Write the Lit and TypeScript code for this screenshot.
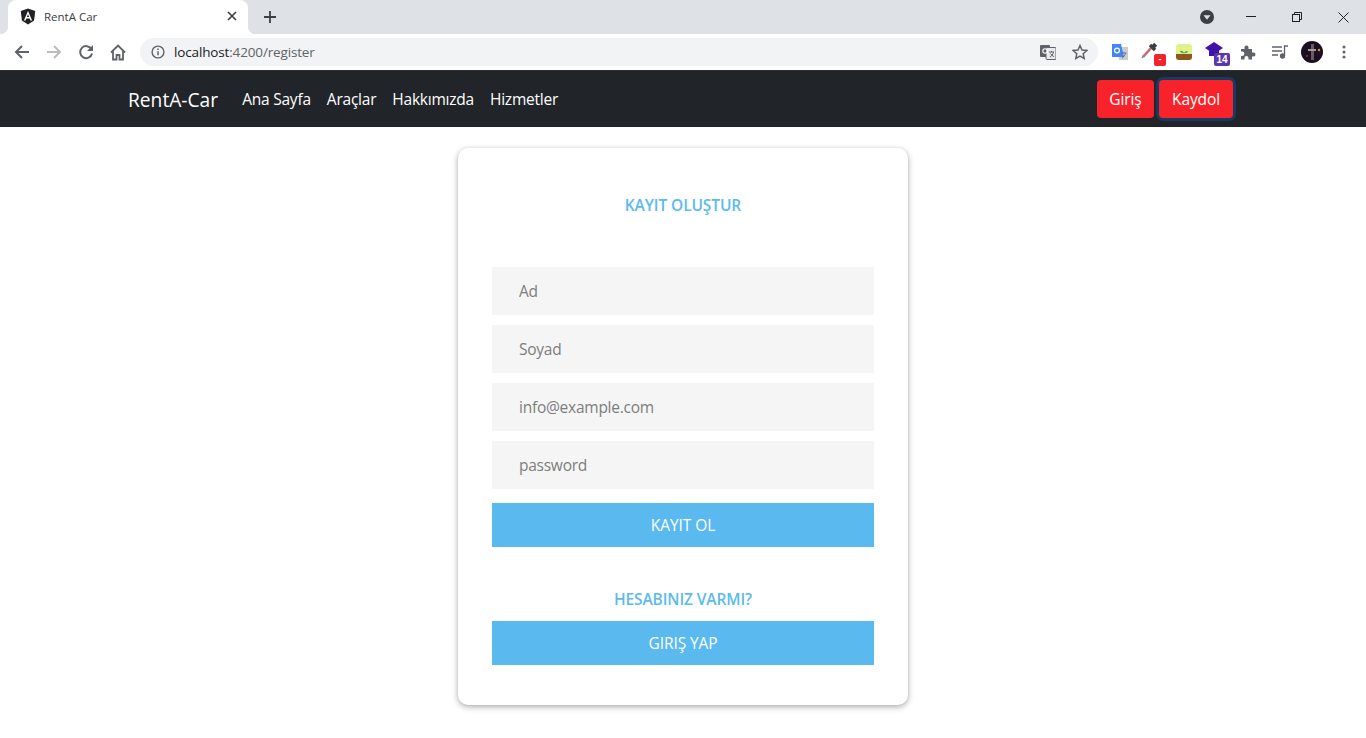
import { LitElement, html, css } from "lit";
import { customElement } from "lit/decorators.js";

@customElement("app-root")
export class AppRoot extends LitElement {
  static styles = css`
    :host { display: block; height: 738px; overflow: hidden; background: #fff; font-family: "Open Sans","Noto Sans",sans-serif; }
    svg { display: block; flex: none; }
    .tabstrip { height: 34px; background: #dee1e6; display: flex; align-items: flex-end; position: relative; }
    .tab { width: 240px; height: 34px; margin-left: 8px; background: #fff; border-radius: 8px 8px 0 0; display: flex; align-items: center; padding: 0 8px 2px 12px; box-sizing: border-box; position: relative; }
    .tab::before, .tab::after { content: ""; position: absolute; bottom: 0; width: 8px; height: 8px; background: radial-gradient(circle at 0 0, transparent 8px, #fff 8.5px); }
    .tab::before { left: -8px; }
    .tab::after { right: -8px; transform: scaleX(-1); }
    .tab-title { font-size: 11.5px; color: #3c4043; margin-left: 8px; flex: 1; }
    .tab-close { margin-right: 3px; }
    .newtab { margin-left: 16px; align-self: center; }
    .winctl { margin-left: auto; display: flex; align-items: center; height: 34px; }
    .profile-dot { margin-right: 14px; }
    .winbtn { width: 46px; display: flex; justify-content: center; }
    .toolbar { height: 36px; background: #fff; display: flex; align-items: center; box-sizing: border-box; padding-left: 6px; }
    .nav-ic { width: 32px; display: flex; justify-content: center; }
    .omni { width: 958px; height: 28px; margin-left: 6px; border-radius: 14px; background: #f1f3f4; display: flex; align-items: center; padding: 0 10px 0 11px; box-sizing: border-box; }
    .url { font-size: 13.5px; color: #5f6368; margin-left: 9px; flex: 1; letter-spacing: -0.15px; }
    .url b { font-weight: 400; color: #202124; }
    .omni-right { display: flex; align-items: center; gap: 16px; }
    .exts { display: flex; align-items: center; margin-left: 6px; }
    .ext { width: 32px; height: 28px; display: flex; justify-content: center; align-items: center; position: relative; }
    .badge { position: absolute; color: #fff; font: 700 9px/10px "Liberation Sans", sans-serif; text-align: center; border-radius: 2px; }
    .b-red { width: 12px; height: 12px; left: 18px; top: 16px; background: #f4222b; line-height: 11px; }
    .b-pur { width: 16px; height: 13px; left: 14px; top: 15px; background: #5e35b1; font-size: 10px; line-height: 13px; }
    .hat { margin: -6px 0 0 -2px; }
    .dropper { margin: -4px 0 0 -4px; }
    .sep { height: 1px; background: #2b2e33; }
    .navbar { height: 56px; background: #212529; display: flex; align-items: center; padding: 0 128px; box-sizing: border-box; }
    .brand { font-size: 19.2px; color: #fff; margin-right: 24px; }
    .link { font-size: 15.5px; color: #fff; margin-right: 16px; letter-spacing: -0.22px; }
    .spacer { flex: 1; }
    .nbtn { height: 38px; border: 0; border-radius: 4px; background: #f8232a; color: #fff; font: 15.5px "Open Sans","Noto Sans",sans-serif; letter-spacing: -0.1px; padding: 0; margin: 0; display: block; }
    .b1 { width: 57px; margin-right: 5px; }
    .b2 { width: 74px; box-shadow: 0 0 0 3px #163a63; margin-right: 5px; }
    .main { display: flex; justify-content: center; padding-top: 21px; }
    .card { width: 450px; height: 557px; box-sizing: border-box; background: #fff; border-radius: 10px; padding: 0 34px; box-shadow: 0 2px 6px rgba(0,0,0,.32), 0 0 2px rgba(0,0,0,.08); display: flex; flex-direction: column; }
    .title { color: #5bbaee; font-weight: 600; font-size: 15.5px; text-align: center; line-height: 20px; letter-spacing: -0.1px; }
    .t1 { margin-top: 47px; margin-bottom: 52px; }
    .field { height: 48px; background: #f5f5f5; display: flex; align-items: center; padding-left: 27px; margin-bottom: 10px; color: #7d7d7d; font-size: 15.5px; letter-spacing: -0.25px; }
    .field input { all: unset; width: 100%; color: #7d7d7d; font: inherit; letter-spacing: inherit; }
    .field input::placeholder { color: #7d7d7d; opacity: 1; }
    .cta { height: 44px; background: #5ab9ee; color: #fff; border: 0; font: 15.5px "Open Sans","Noto Sans",sans-serif; letter-spacing: -0.08px; display: block; width: 100%; padding: 0; }
    .first { margin-top: 4px; }
    .t2 { margin-top: 42px; margin-bottom: 12px; }
  `;

  render() {
    return html`
      <div class="tabstrip">
        <div class="tab">
          <svg width="16" height="17" viewBox="0 0 16 16"><path d="M8 0 15.2 2.6 14.1 12.1 8 16 1.9 12.1.8 2.6Z" fill="#202124"/><path d="M8 2.6 3.9 12h1.600l.8-2.100h3.400l.8 2.100h1.600ZM6.900 8.600 8 5.700l1.100 2.900Z" fill="#fff"/></svg>
          <span class="tab-title">RentA Car</span>
          <svg class="tab-close" width="10" height="10" viewBox="0 0 10 10"><path d="M1 1l8 8M9 1 1 9" stroke="#3c4043" stroke-width="1.700"/></svg>
        </div>
        <svg class="newtab" width="12" height="12" viewBox="0 0 12 12"><path d="M6 0v12M0 6h12" stroke="#3c4043" stroke-width="1.800"/></svg>
        <div class="winctl">
          <svg class="profile-dot" width="14" height="14" viewBox="0 0 14 14"><circle cx="7" cy="7" r="7" fill="#3c4043"/><path d="M3.500 5.200h7L7 9.800Z" fill="#dee1e6"/></svg>
          <div class="winbtn"><svg width="10" height="10" viewBox="0 0 10 10"><path d="M0 4.500h10" stroke="#202124"/></svg></div>
          <div class="winbtn"><svg width="10" height="10" viewBox="0 0 10 10" fill="none" stroke="#202124"><rect x=".5" y="2.500" width="7" height="7"/><path d="M2.500 2.500V.5h7v7h-2"/></svg></div>
          <div class="winbtn"><svg width="11" height="11" viewBox="0 0 11 11"><path d="M.5.5l10 10M10.500.5l-10 10" stroke="#202124"/></svg></div>
        </div>
      </div>
      <div class="toolbar">
        <div class="nav-ic"><svg width="16" height="16" viewBox="0 0 16 16" fill="none" stroke="#5f6368" stroke-width="2"><path d="M15 8H2M8 2 2 8l6 6"/></svg></div>
        <div class="nav-ic"><svg width="16" height="16" viewBox="0 0 16 16" fill="none" stroke="#babcbe" stroke-width="2"><path d="M1 8h13M8 2l6 6-6 6"/></svg></div>
        <div class="nav-ic"><svg width="16" height="16" viewBox="0 0 16 16" fill="none"><path d="M13.400 5.200A6 6 0 1 0 14 9.500" stroke="#5f6368" stroke-width="2"/><path d="M15 1v6H9Z" fill="#5f6368"/></svg></div>
        <div class="nav-ic"><svg width="16" height="17" viewBox="0 0 16 17" fill="none" stroke="#5f6368" stroke-width="1.800"><path d="M1 8.500 8 1.500l7 7M3 7v8.500h3.500V11h3v4.500H13V7"/></svg></div>
        <div class="omni">
          <svg width="14" height="14" viewBox="0 0 14 14" fill="none"><circle cx="7" cy="7" r="5.900" stroke="#5f6368" stroke-width="1.400"/><path d="M7 6.200v4M7 3.600v1.500" stroke="#5f6368" stroke-width="1.500"/></svg>
          <span class="url"><b>localhost</b>:4200/register</span>
          <div class="omni-right">
            <svg width="16" height="16" viewBox="0 0 16 16"><rect x="0" y="1" width="10" height="12" rx="1" fill="#5f6368"/><rect x="6" y="3.500" width="10" height="12" rx="1" fill="#e8eaed" stroke="#5f6368"/><circle cx="5" cy="7" r="2.200" fill="none" stroke="#fff" stroke-width="1.100"/><path d="M9 8h5M11.500 7v1M10 13c2-1 3-3 3.400-5M10.500 9.500c1 1.500 2 2.500 3.500 3.200" stroke="#5f6368" fill="none"/></svg>
            <svg width="16" height="16" viewBox="0 0 16 16"><path d="M8 1.500l2 4.500 4.800.5-3.600 3.200 1 4.800L8 12.100l-4.200 2.400 1-4.800L1.200 6.500 6 6Z" fill="none" stroke="#5f6368" stroke-width="1.500"/></svg>
          </div>
        </div>
        <div class="exts">
          <div class="ext"><svg width="18" height="18" viewBox="0 0 18 18"><path d="M7 4h10v13H8Z" fill="#c9cdd2"/><path d="M1 1h9l3 13H1Z" fill="#4285f4"/><circle cx="6" cy="7.500" r="2.400" fill="none" stroke="#fff" stroke-width="1.200"/><path d="M10.500 10h5M13 9v1M11 15c2-1 3-3 3.500-5" stroke="#5f6368" stroke-width=".8" fill="none"/></svg></div>
          <div class="ext"><svg class="dropper" width="18" height="18" viewBox="0 0 18 18"><path d="M2 16 10 7" stroke="#c96a6a" stroke-width="2.600"/><path d="M1 17 3 14" stroke="#8a8d90" stroke-width="1.500"/><path d="M9 4l5 5M12 3l3 3" stroke="#3c4043" stroke-width="3.400"/></svg><span class="badge b-red">-</span></div>
          <div class="ext"><svg width="16" height="16" viewBox="0 0 16 16"><rect width="16" height="16" rx="3" fill="#dff28e"/><path d="M0 10h16v3a3 3 0 0 1-3 3H3a3 3 0 0 1-3-3Z" fill="#8a5a1c"/><path d="M8 9C7 7 5.500 6.500 4 7c1 2 2.500 2.500 4 2Zm0 0c1-1.500 2.500-2 4-1.500C11 9 9.500 9.500 8 9Z" fill="#5c9a32"/></svg></div>
          <div class="ext"><svg class="hat" width="20" height="14" viewBox="0 0 20 14"><path d="M9 0l9 6-9 6-9-6Z" fill="#3f12a8"/><path d="M4 8h10v6H4Z" fill="#3f12a8"/></svg><span class="badge b-pur">14</span></div>
          <div class="ext"><svg width="16" height="16" viewBox="0 0 16 16"><path d="M1 5h3.500V3.500a2 2 0 0 1 4 0V5H12v3.500h1.500a2 2 0 0 1 0 4H12V15.500H8.500V14a2 2 0 0 0-4 0v1.500H1v-3.500h1.200a2.200 2.200 0 0 0 0-4.400H1Z" fill="#5f6368"/></svg></div>
          <div class="ext"><svg width="16" height="14" viewBox="0 0 16 14" fill="none" stroke="#5f6368" stroke-width="1.300"><path d="M0 2h10M0 6h10M0 10h6M12.500 11V1H16"/><circle cx="10.500" cy="11" r="2" fill="#5f6368"/></svg></div>
          <div class="ext"><svg width="22" height="22" viewBox="0 0 22 22"><circle cx="11" cy="11" r="11" fill="#1a1023"/><path d="M10 3h3v16h-3Z" fill="#6a5a5e"/><path d="M7 8h8v2H7Z" fill="#a79a96"/><circle cx="18" cy="9" r="1.200" fill="#d99a2b"/><circle cx="6" cy="15" r="1" fill="#8a3a2a"/></svg></div>
          <div class="ext"><svg width="4" height="14" viewBox="0 0 4 14" fill="#5f6368"><circle cx="2" cy="2" r="1.500"/><circle cx="2" cy="7" r="1.500"/><circle cx="2" cy="12" r="1.500"/></svg></div>
        </div>
      </div>
      <div class="sep"></div>
      <nav class="navbar">
        <span class="brand">RentA-Car</span>
        <span class="link">Ana Sayfa</span>
        <span class="link">Araçlar</span>
        <span class="link">Hakkımızda</span>
        <span class="link">Hizmetler</span>
        <span class="spacer"></span>
        <button class="nbtn b1">Giriş</button>
        <button class="nbtn b2">Kaydol</button>
      </nav>
      <main class="main">
        <section class="card">
          <div class="title t1">KAYIT OLUŞTUR</div>
          <div class="field"><input placeholder="Ad" /></div>
          <div class="field"><input placeholder="Soyad" /></div>
          <div class="field"><input placeholder="info@example.com" /></div>
          <div class="field"><input placeholder="password" /></div>
          <button class="cta first">KAYIT OL</button>
          <div class="title t2">HESABINIZ VARMI?</div>
          <button class="cta">GIRIŞ YAP</button>
        </section>
      </main>
    `;
  }
}
